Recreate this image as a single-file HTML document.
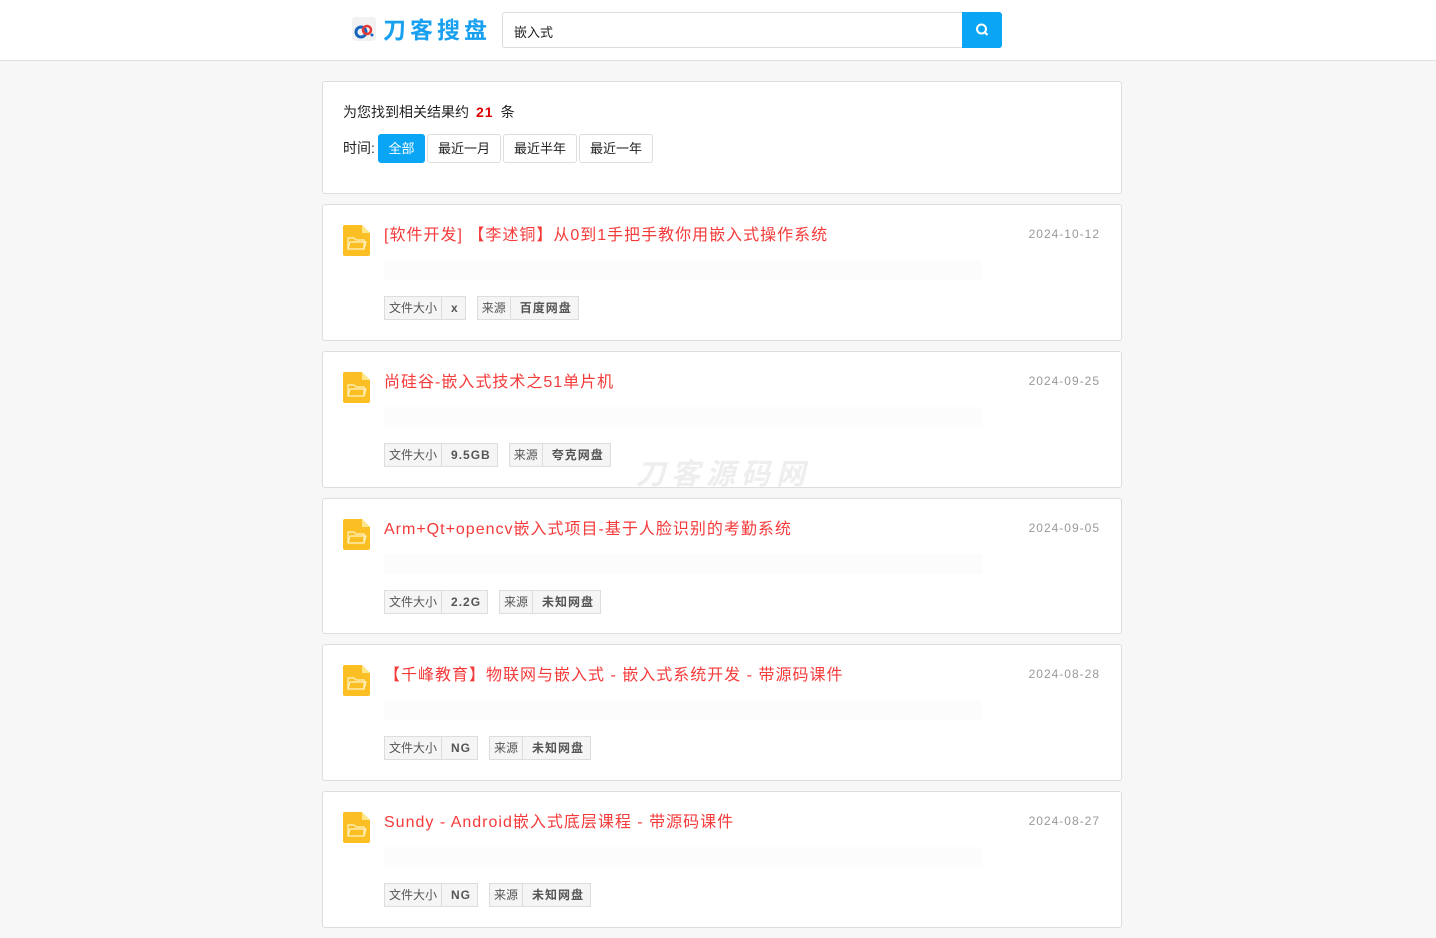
<!DOCTYPE html>
<html><head><meta charset="utf-8"><style>
*{box-sizing:border-box;margin:0;padding:0}
body{width:1436px;height:938px;overflow:hidden;background:#f7f7f7;font-family:"Liberation Sans","Noto Sans CJK SC",sans-serif;color:#333;position:relative}
.hd{position:absolute;left:0;top:0;width:1436px;height:61px;background:#fff;border-bottom:1px solid #e0e0e0}
.logo{position:absolute;left:352px;top:17px;width:24px;height:24px;background:#f2f2f2;border-radius:4px}
.brand{position:absolute;left:383px;top:11px;font-size:23px;font-weight:bold;color:#18a0f0;letter-spacing:4px}
.inp{position:absolute;left:502px;top:12px;width:461px;height:36px;border:1px solid #ddd;border-radius:3px 0 0 3px;font-size:13px;color:#222;padding:9px 11px}
.btn{position:absolute;left:962px;top:12px;width:40px;height:36px;background:#0aa5f5;border-radius:0 3px 3px 0}
.box{position:absolute;left:322px;width:800px;background:#fff;border:1px solid #ddd;border-radius:3px}
.f1{position:absolute;left:20px;top:20px;font-size:14px;color:#222}
.f1 b{color:#d00;margin:0 7px;letter-spacing:1px}
.tl{position:absolute;left:20px;top:56px;font-size:14px;color:#222}
.tb{position:absolute;top:52px;height:29px;border:1px solid #ddd;border-radius:3px;font-size:13px;line-height:27px;text-align:center;color:#222;background:#fff}
.ic{position:absolute;left:20px;top:20px;width:27px;height:31px}
.t{position:absolute;left:61px;top:16px;font-size:16px;color:#f53a3a;white-space:nowrap;letter-spacing:1px}
.d{position:absolute;right:21px;top:22px;font-size:12px;color:#999;letter-spacing:1px}
.bar{position:absolute;left:61px;top:55px;width:598px;height:20px;background:#fcfcfc}
.tags{position:absolute;left:61px;top:91px;display:flex;gap:11px}
.tg{display:flex;border:1px solid #ddd;height:24px;font-size:12px;line-height:22px;background:#f5f5f5}
.tg span{padding:0 4px;color:#555}
.tg span+span{border-left:1px solid #ddd;font-weight:bold;padding:0 6px 0 9px;letter-spacing:1px}
.wm{position:absolute;left:636px;top:451px;font-size:29px;font-weight:bold;font-style:italic;color:#eee;letter-spacing:6px}
</style></head><body>
<div class="hd">
<div class="logo"><svg width="24" height="24" viewBox="0 0 24 24"><circle cx="9" cy="15" r="5" fill="none" stroke="#1565c0" stroke-width="3"/><circle cx="15" cy="13" r="4" fill="none" stroke="#e53935" stroke-width="2.5"/><circle cx="20" cy="18" r="1.5" fill="#1565c0"/></svg></div>
<div class="brand">刀客搜盘</div>
<div class="inp">嵌入式</div>
<div class="btn"><svg width="40" height="36" viewBox="0 0 40 36"><circle cx="19.5" cy="17" r="4.5" fill="none" stroke="#fff" stroke-width="2"/><path d="M23 20.5l2.5 2.5" stroke="#fff" stroke-width="2"/></svg></div>
</div>
<div class="box" style="top:81px;height:113px">
<div class="f1">为您找到相关结果约<b>21</b>条</div>
<div class="tl">时间:</div>
<div class="tb" style="left:55px;width:47px;background:#0aa5f5;border-color:#0aa5f5;color:#fff">全部</div>
<div class="tb" style="left:104px;width:74px">最近一月</div>
<div class="tb" style="left:180px;width:74px">最近半年</div>
<div class="tb" style="left:256px;width:74px">最近一年</div>
</div>
<svg width="0" height="0" style="position:absolute"><defs><symbol id="fd" viewBox="0 0 27 31"><path d="M0 2Q0 0 2 0H19L27 8V29Q27 31 25 31H2Q0 31 0 29Z" fill="#fbbf24"/><path d="M19 0V8H27Z" fill="#fde68a"/><path d="M5 13H11L13 15H21V24H5Z" fill="none" stroke="#fff3c4" stroke-width="1.2"/><path d="M5 24L7 17H23L21 24" fill="none" stroke="#fff3c4" stroke-width="1.2"/></symbol></defs></svg>

<div class="box" style="top:204px;height:137px"><svg class="ic"><use href="#fd"/></svg><div class="t">[软件开发] 【李述铜】从0到1手把手教你用嵌入式操作系统</div><div class="d">2024-10-12</div><div class="bar"></div><div class="tags"><div class="tg"><span>文件大小</span><span>x</span></div><div class="tg"><span>来源</span><span>百度网盘</span></div></div></div>
<div class="box" style="top:351px;height:137px"><svg class="ic"><use href="#fd"/></svg><div class="t">尚硅谷-嵌入式技术之51单片机</div><div class="d">2024-09-25</div><div class="bar"></div><div class="tags"><div class="tg"><span>文件大小</span><span>9.5GB</span></div><div class="tg"><span>来源</span><span>夸克网盘</span></div></div></div>
<div class="box" style="top:498px;height:136px"><svg class="ic"><use href="#fd"/></svg><div class="t">Arm+Qt+opencv嵌入式项目-基于人脸识别的考勤系统</div><div class="d">2024-09-05</div><div class="bar"></div><div class="tags"><div class="tg"><span>文件大小</span><span>2.2G</span></div><div class="tg"><span>来源</span><span>未知网盘</span></div></div></div>
<div class="box" style="top:644px;height:137px"><svg class="ic"><use href="#fd"/></svg><div class="t">【千峰教育】物联网与嵌入式 - 嵌入式系统开发 - 带源码课件</div><div class="d">2024-08-28</div><div class="bar"></div><div class="tags"><div class="tg"><span>文件大小</span><span>NG</span></div><div class="tg"><span>来源</span><span>未知网盘</span></div></div></div>
<div class="box" style="top:791px;height:137px"><svg class="ic"><use href="#fd"/></svg><div class="t">Sundy - Android嵌入式底层课程 - 带源码课件</div><div class="d">2024-08-27</div><div class="bar"></div><div class="tags"><div class="tg"><span>文件大小</span><span>NG</span></div><div class="tg"><span>来源</span><span>未知网盘</span></div></div></div>
<div class="wm">刀客源码网</div>
</body></html>
